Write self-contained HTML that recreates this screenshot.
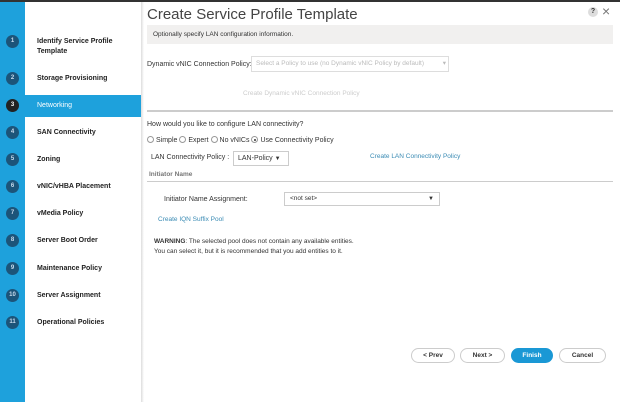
<!DOCTYPE html>
<html><head><style>
*{margin:0;padding:0;box-sizing:border-box}
body{width:620px;height:402px;overflow:hidden;background:#fff;font-family:"Liberation Sans",sans-serif;position:relative;color:#333}
.a{position:absolute;white-space:nowrap}
.strip{left:0;top:0;width:25px;height:402px;background:#1ea1dc}
.nav{left:25px;top:0;width:116px;height:402px;background:#fff}
.shadow{left:141px;top:0;width:3px;height:402px;background:linear-gradient(90deg,#ddd,#fff)}
.c{width:13px;height:13px;border-radius:50%;background:#1c5479;color:#cde;font-size:6px;font-weight:bold;text-align:center;line-height:13px;left:6px}
.n{left:37px;font-size:7px;font-weight:bold;color:#222}
.s{font-size:7px;color:#333}
.btn{top:348px;height:15px;border:1px solid #ccc;border-radius:8px;font-size:6.5px;font-weight:bold;text-align:center;line-height:13px;color:#333;background:#fff}
.r{display:inline-block;width:7px;height:7px;border:1px solid #999;border-radius:50%;vertical-align:-1px;margin-right:2px;position:relative}
</style></head><body>
<div class="a" style="left:0;top:0;width:620px;height:2px;background:#333;z-index:5"></div>
<div class="a strip"></div>
<div class="a nav"></div>
<div class="a shadow"></div>
<div class="a" style="left:25px;top:95px;width:116px;height:22px;background:#1ea1dc"></div>
<div class="a c" style="top:35px">1</div><div class="a n" style="top:37px;line-height:10px">Identify Service Profile<br>Template</div>
<div class="a c" style="top:72px">2</div><div class="a n" style="top:75px">Storage Provisioning</div>
<div class="a c" style="top:99px;background:#222;color:#fff">3</div><div class="a n" style="top:102px;color:#fff;font-weight:normal">Networking</div>
<div class="a c" style="top:126px">4</div><div class="a n" style="top:129px">SAN Connectivity</div>
<div class="a c" style="top:153px">5</div><div class="a n" style="top:156px">Zoning</div>
<div class="a c" style="top:180px">6</div><div class="a n" style="top:183px">vNIC/vHBA Placement</div>
<div class="a c" style="top:207px">7</div><div class="a n" style="top:210px">vMedia Policy</div>
<div class="a c" style="top:234px">8</div><div class="a n" style="top:237px">Server Boot Order</div>
<div class="a c" style="top:262px">9</div><div class="a n" style="top:265px">Maintenance Policy</div>
<div class="a c" style="top:289px">10</div><div class="a n" style="top:292px">Server Assignment</div>
<div class="a c" style="top:316px">11</div><div class="a n" style="top:319px">Operational Policies</div>

<div class="a" style="left:147px;top:6px;font-size:15px;color:#444">Create Service Profile Template</div>
<div class="a" style="left:588px;top:7px;width:10px;height:10px;border-radius:50%;background:#ddd;font-size:7px;font-weight:bold;text-align:center;line-height:10px">?</div>
<div class="a" style="left:602px;top:3px;font-size:14px;color:#777">×</div>
<div class="a" style="left:147px;top:25px;width:466px;height:19px;background:#f1f0ef"></div>
<div class="a s" style="left:153px;top:31px;font-size:6.5px">Optionally specify LAN configuration information.</div>
<div class="a s" style="left:147px;top:61px">Dynamic vNIC Connection Policy:</div>
<div class="a" style="left:251px;top:56px;width:198px;height:16px;border:1px solid #ddd;font-size:6.5px;color:#bbb;line-height:14px;padding-left:4px">Select a Policy to use (no Dynamic vNIC Policy by default)<span style="position:absolute;right:2px">▾</span></div>
<div class="a s" style="left:243px;top:90px;color:#ccc;font-size:6.5px">Create Dynamic vNIC Connection Policy</div>
<div class="a" style="left:147px;top:110px;width:466px;height:2px;background:#ccc"></div>
<div class="a s" style="left:147px;top:121px">How would you like to configure LAN connectivity?</div>
<div class="a s" style="left:147px;top:136px"><span class="r"></span>Simple <span class="r"></span>Expert <span class="r"></span>No vNICs <span class="r"><span style="position:absolute;left:1.5px;top:1.5px;width:2px;height:2px;border-radius:50%;background:#333"></span></span>Use Connectivity Policy</div>
<div class="a s" style="left:151px;top:154px">LAN Connectivity Policy :</div>
<div class="a s" style="left:233px;top:151px;width:56px;height:15px;border:1px solid #ccc;line-height:13px;padding-left:4px">LAN-Policy <span style="font-size:6px">▼</span></div>
<div class="a s" style="left:370px;top:153px;color:#3a8bb4;font-size:6.5px">Create LAN Connectivity Policy</div>
<div class="a s" style="left:149px;top:171px;color:#777;font-weight:bold;font-size:6.5px">Initiator Name</div>
<div class="a" style="left:147px;top:181px;width:466px;height:1px;background:#ccc"></div>
<div class="a s" style="left:164px;top:196px">Initiator Name Assignment:</div>
<div class="a s" style="left:284px;top:192px;width:156px;height:14px;border:1px solid #ccc;line-height:12px;padding-left:5px;font-size:6.5px">&lt;not set&gt;<span style="position:absolute;right:5px;font-size:6px">▼</span></div>
<div class="a s" style="left:158px;top:216px;color:#3a8bb4;font-size:6.5px">Create IQN Suffix Pool</div>
<div class="a s" style="left:154px;top:237px;font-size:6.5px;line-height:10px"><b>WARNING</b>: The selected pool does not contain any available entities.<br>You can select it, but it is recommended that you add entities to it.</div>
<div class="a btn" style="left:411px;width:44px">&lt; Prev</div>
<div class="a btn" style="left:460px;width:45px">Next &gt;</div>
<div class="a btn" style="left:511px;width:42px;background:#1a98d5;border-color:#1a98d5;color:#fff">Finish</div>
<div class="a btn" style="left:559px;width:47px">Cancel</div>
</body></html>
